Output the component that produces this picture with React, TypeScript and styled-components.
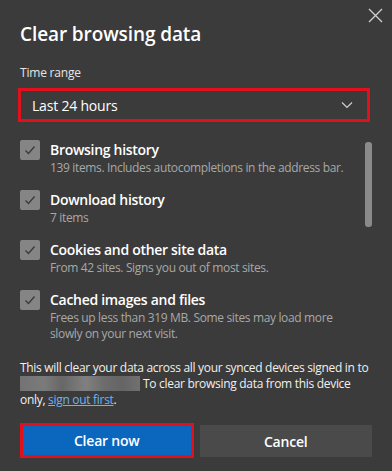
import React from "react";
import styled, { createGlobalStyle } from "styled-components";

const Global = createGlobalStyle`
  html, body { margin: 0; padding: 0; background: #3b3b3b; }
  body { font-family: "Open Sans", "Noto Sans", sans-serif; color: #fff; }
`;

const Dialog = styled.div`
  position: relative;
  width: 392px;
  height: 471px;
  box-sizing: border-box;
  padding: 22px 20px 0 20px;
  background: #3b3b3b;
  display: flex;
  flex-direction: column;
  overflow: hidden;
`;

const Close = styled.button`
  position: absolute;
  top: 8px;
  right: 9px;
  width: 15px;
  height: 15px;
  padding: 0;
  border: 0;
  background: transparent;
  display: flex;
`;

const Title = styled.h1`
  margin: 0;
  font-size: 19px;
  font-weight: 600;
  line-height: 24px;
  letter-spacing: -0.1px;
  color: #fff;
`;

const Label = styled.div`
  margin-top: 19px;
  font-size: 12px;
  line-height: 16px;
  color: #e6e6e6;
  letter-spacing: -0.2px;
`;

const Select = styled.div`
  margin-top: 7px;
  margin-left: -2px;
  width: 352px;
  height: 34px;
  box-sizing: border-box;
  border: 3px solid #e0101c;
  display: flex;
  align-items: center;
  justify-content: space-between;
  padding: 0 14px 0 11px;
  font-size: 14px;
  letter-spacing: -0.2px;
  color: #fff;
`;

const ListArea = styled.div`
  position: relative;
  margin-top: 18px;
  display: flex;
  flex-direction: column;
  gap: 14px;
`;

const Scrollbar = styled.div`
  position: absolute;
  top: 2px;
  right: 0px;
  width: 7px;
  height: 85px;
  border-radius: 3px;
  background: #8a8a8a;
`;

const Item = styled.div`
  display: flex;
  gap: 10px;
  align-items: flex-start;
`;

const Check = styled.div`
  width: 20px;
  height: 20px;
  flex: none;
  border-radius: 2px;
  background: #858585;
  display: flex;
  align-items: center;
  justify-content: center;
`;

const ItemText = styled.div`
  display: flex;
  flex-direction: column;
`;

const ItemTitle = styled.div`
  font-size: 14px;
  font-weight: 600;
  line-height: 20px;
  color: #fff;
  letter-spacing: -0.3px;
`;

const ItemSub = styled.div`
  font-size: 12px;
  line-height: 16px;
  color: #a8a8a8;
  letter-spacing: -0.35px;
  max-width: 305px;
`;

const Info = styled.p`
  margin: 18px 0 0 0;
  font-size: 12px;
  line-height: 16px;
  color: #f0f0f0;
  letter-spacing: -0.3px;
`;

const Blur = styled.span`
  display: inline-block;
  width: 120px;
  height: 15px;
  vertical-align: -3px;
  margin-right: 3px;
  background: linear-gradient(90deg, #7d7d7d 0%, #868686 20%, #6f6f6f 35%, #8c8c8c 55%, #757575 70%, #6c6c6c 85%, #7a7a7a 100%);
  opacity: 0.85;
`;

const Link = styled.a`
  color: #6cb4ef;
  text-decoration: underline;
`;

const Buttons = styled.div`
  margin-top: 15px;
  display: flex;
  gap: 6px;
`;

const Button = styled.button<{ $primary?: boolean }>`
  height: ${(p) => (p.$primary ? "35px" : "32px")};
  margin-top: ${(p) => (p.$primary ? "0" : "2px")};
  width: ${(p) => (p.$primary ? "174px" : "173px")};
  box-sizing: border-box;
  border: ${(p) => (p.$primary ? "3px solid #e0101c" : "0")};
  background: ${(p) => (p.$primary ? "#0a67bd" : "#4a4a4a")};
  color: #fff;
  font-family: "Open Sans", "Noto Sans", sans-serif;
  font-size: 14px;
  font-weight: 600;
  letter-spacing: -0.2px;
  padding: 0;
`;

const items = [
  { t: "Browsing history", s: "139 items. Includes autocompletions in the address bar." },
  { t: "Download history", s: "7 items" },
  { t: "Cookies and other site data", s: "From 42 sites. Signs you out of most sites." },
  { t: "Cached images and files", s: "Frees up less than 319 MB. Some sites may load more slowly on your next visit." },
];

export default function App() {
  return (
    <>
      <Global />
      <Dialog>
        <Close aria-label="Close">
          <svg width="15" height="15" viewBox="0 0 15 15">
            <path d="M1 1 L14 14 M14 1 L1 14" stroke="#d0d0d0" strokeWidth="1.3" />
          </svg>
        </Close>
        <Title>Clear browsing data</Title>
        <Label>Time range</Label>
        <Select>
          <span>Last 24 hours</span>
          <svg width="12" height="8" viewBox="0 0 12 8">
            <path d="M1 1.5 L6 6.5 L11 1.5" stroke="#d0d0d0" strokeWidth="1.2" fill="none" />
          </svg>
        </Select>
        <ListArea>
          <Scrollbar />
          {items.map((it) => (
            <Item key={it.t}>
              <Check>
                <svg width="14" height="14" viewBox="0 0 14 14">
                  <path d="M2.5 7.5 L5.5 10.5 L11.5 3.5" stroke="#3b3b3b" strokeWidth="1.4" fill="none" />
                </svg>
              </Check>
              <ItemText>
                <ItemTitle>{it.t}</ItemTitle>
                <ItemSub>{it.s}</ItemSub>
              </ItemText>
            </Item>
          ))}
        </ListArea>
        <Info>
          This will clear your data across all your synced devices signed in to <Blur />
          To clear browsing data from this device
          <br />
          only, <Link href="#">sign out first</Link>.
        </Info>
        <Buttons>
          <Button $primary>Clear now</Button>
          <Button>Cancel</Button>
        </Buttons>
      </Dialog>
    </>
  );
}
